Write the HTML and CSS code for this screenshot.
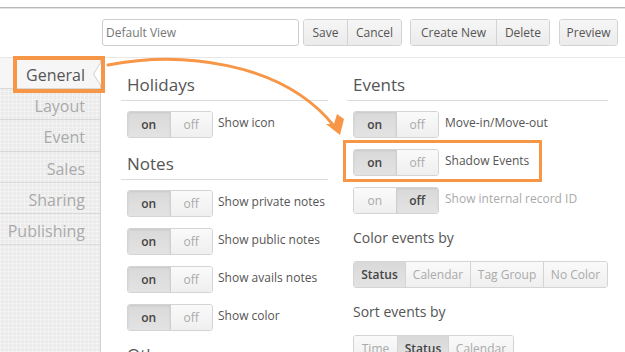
FILE: index.html
```html
<!DOCTYPE html>
<html>
<head>
<meta charset="utf-8">
<link rel="stylesheet" href="styles.css">
</head>
<body>
<div class="page">
  <div class="topline"></div>
  <div class="toolbar">
    <div class="view-input">Default View</div>
    <div class="btn-group g-first">
      <div class="btn w-save">Save</div>
      <div class="btn w-cancel">Cancel</div>
    </div>
    <div class="btn-group g-second">
      <div class="btn w-create">Create New</div>
      <div class="btn w-delete">Delete</div>
    </div>
    <div class="btn-group g-third">
      <div class="btn w-preview">Preview</div>
    </div>
  </div>
  <div class="main">
    <nav class="sidebar">
      <div class="nav-item active">General
        <svg class="notch" width="9" height="22" viewBox="0 0 9 22"><polygon points="9,0 1.5,11 9,22" fill="#ffffff"/><polyline points="8.5,0 1.5,11 8.5,22" fill="none" stroke="#cfcfcf" stroke-width="1"/></svg>
      </div>
      <div class="nav-item">Layout</div>
      <div class="nav-item">Event</div>
      <div class="nav-item">Sales</div>
      <div class="nav-item">Sharing</div>
      <div class="nav-item">Publishing</div>
    </nav>
    <div class="content">
      <div class="col col-left">
        <h2 class="heading first">Holidays</h2>
        <div class="rows">
          <div class="row"><div class="toggle"><span class="t-on sel">on</span><span class="t-off">off</span></div><span class="label">Show icon</span></div>
        </div>
        <h2 class="heading">Notes</h2>
        <div class="rows">
          <div class="row"><div class="toggle"><span class="t-on sel">on</span><span class="t-off">off</span></div><span class="label">Show private notes</span></div>
          <div class="row"><div class="toggle"><span class="t-on sel">on</span><span class="t-off">off</span></div><span class="label">Show public notes</span></div>
          <div class="row"><div class="toggle"><span class="t-on sel">on</span><span class="t-off">off</span></div><span class="label">Show avails notes</span></div>
          <div class="row"><div class="toggle"><span class="t-on sel">on</span><span class="t-off">off</span></div><span class="label">Show color</span></div>
        </div>
        <h2 class="heading other">Other</h2>
      </div>
      <div class="col col-right">
        <h2 class="heading first">Events</h2>
        <div class="rows">
          <div class="row"><div class="toggle"><span class="t-on sel">on</span><span class="t-off">off</span></div><span class="label">Move-in/Move-out</span></div>
          <div class="row"><div class="toggle"><span class="t-on sel">on</span><span class="t-off">off</span></div><span class="label">Shadow Events</span></div>
          <div class="row"><div class="toggle"><span class="t-on">on</span><span class="t-off sel">off</span></div><span class="label dim">Show internal record ID</span></div>
        </div>
        <div class="sub-label">Color events by</div>
        <div class="segmented">
          <span class="seg sel s-status">Status</span><span class="seg s-cal">Calendar</span><span class="seg s-tag">Tag Group</span><span class="seg s-none">No Color</span>
        </div>
        <div class="sub-label">Sort events by</div>
        <div class="segmented">
          <span class="seg s-time">Time</span><span class="seg sel s-status">Status</span><span class="seg s-cal2">Calendar</span>
        </div>
      </div>
    </div>
  </div>

  <div class="hl hl-general"></div>
  <div class="hl hl-shadow"></div>
  <svg class="arrow" width="625" height="352" viewBox="0 0 625 352">
    <path d="M108 65 C 180 51, 282 61, 334 126" fill="none" stroke="#f79646" stroke-width="3" stroke-linecap="round"/>
    <polygon points="340,135 326,124 334,124 337,114 344,119" fill="#f79646"/>
  </svg>
</div>
</body>
</html>
```
FILE: styles.css
```css
html, body {
  margin: 0;
  padding: 0;
  width: 625px;
  height: 352px;
  overflow: hidden;
  background: #ffffff;
}
body {
  font-family: "Open Sans", "DejaVu Sans", sans-serif;
  color: #555;
}
.page {
  position: relative;
  width: 625px;
  height: 352px;
  overflow: hidden;
}
.topline {
  height: 7px;
  border-bottom: 1px solid #b9b9b9;
}
.toolbar {
  display: flex;
  align-items: stretch;
  border-top: 1px solid #e2e2e2;
  border-bottom: 1px solid #e8e8e8;
  padding: 10px 0 11px 102px;
  height: 27px;
}
.view-input {
  box-sizing: border-box;
  width: 197px;
  height: 27px;
  border: 1px solid #cdcdcd;
  border-radius: 3px;
  font-size: 12px;
  line-height: 25px;
  padding-left: 3px;
  color: #777;
  background: #fff;
}
.btn-group {
  display: flex;
  border: 1px solid #d3d3d3;
  border-radius: 3px;
  overflow: hidden;
  box-sizing: border-box;
  height: 27px;
}
.g-first { margin-left: 4px; }
.g-second { margin-left: 8px; }
.g-third { margin-left: 9px; }
.btn {
  box-sizing: border-box;
  font-size: 12px;
  line-height: 25px;
  text-align: center;
  color: #555;
  background: linear-gradient(#f6f6f6, #ebebeb);
}
.btn + .btn { border-left: 1px solid #d3d3d3; }
.w-save { width: 43px; }
.w-cancel { width: 54px; }
.w-create { width: 85px; }
.w-delete { width: 53px; }
.w-preview { width: 57px; }

.main {
  display: flex;
  height: 294px;
}
.sidebar {
  width: 100px;
  border-right: 1px solid #d2d2d2;
  background-color: #ebebeb;
  background-image:
    repeating-linear-gradient(90deg, rgba(255,255,255,0.35) 0 1px, transparent 1px 4px),
    repeating-linear-gradient(0deg, rgba(255,255,255,0.35) 0 1px, transparent 1px 4px);
}
.nav-item {
  position: relative;
  box-sizing: border-box;
  height: 31.2px;
  padding: 5px 15px 0 0;
  line-height: 25.2px;
  font-size: 16px;
  text-align: right;
  color: #aaa;
  border-bottom: 1px solid #d9d9d9;
}
.nav-item.active {
  color: #555;
  background: #f6f6f6;
}
.notch {
  position: absolute;
  right: -1px;
  top: 5px;
}
.content {
  flex: 1;
  display: flex;
  padding: 16px 0 0 20px;
  gap: 19px;
}
.col-left { width: 207px; }
.col-right { width: 261px; }
.heading {
  margin: 15px 0 0 0;
  padding: 0 0 4px 6px;
  font-size: 17px;
  line-height: 22px;
  font-weight: 400;
  color: #555;
  border-bottom: 1px solid #dcdcdc;
}
.heading.first { margin-top: 0; }
.heading.other { margin-top: 13px; }
.rows {
  display: flex;
  flex-direction: column;
  gap: 11px;
  margin-top: 10px;
  padding-left: 6px;
}
.row {
  display: flex;
  align-items: flex-start;
  height: 27px;
}
.toggle {
  display: flex;
  box-sizing: border-box;
  width: 86px;
  height: 27px;
  border: 1px solid #d4d4d4;
  border-radius: 3px;
  overflow: hidden;
}
.toggle span {
  flex: 1;
  text-align: center;
  font-size: 12px;
  line-height: 26px;
  color: #aaa;
  background: linear-gradient(#fafafa, #efefef);
}
.toggle .t-off { border-left: 1px solid #cfcfcf; }
.toggle span.sel {
  color: #444;
  font-weight: 600;
  background: linear-gradient(#d9d9d9, #e3e3e3);
  box-shadow: inset 0 1px 2px rgba(0,0,0,0.08);
}
.label {
  margin-left: 5px;
  font-size: 12px;
  line-height: 24px;
  color: #555;
}
.label.dim { color: #aaa; }
.col-right .label { margin-left: 6px; }
.sub-label {
  margin: 14px 0 0 6px;
  font-size: 14px;
  line-height: 20px;
  color: #555;
}
.segmented {
  display: flex;
  margin: 13px 0 0 6px;
  box-sizing: border-box;
  height: 27px;
  width: max-content;
  border: 1px solid #d4d4d4;
  border-radius: 3px;
  overflow: hidden;
}
.seg {
  box-sizing: border-box;
  text-align: center;
  font-size: 12px;
  line-height: 25px;
  color: #aaa;
  background: linear-gradient(#fafafa, #efefef);
}
.seg + .seg { border-left: 1px solid #d4d4d4; }
.seg.sel {
  color: #444;
  font-weight: 600;
  background: linear-gradient(#d9d9d9, #e3e3e3);
}
.s-status { width: 51px; }
.s-cal { width: 65px; }
.s-tag { width: 73px; }
.s-none { width: 64px; }
.s-time { width: 43px; }
.s-cal2 { width: 65px; }

.hl {
  position: absolute;
  box-sizing: border-box;
  border: 4px solid #f79646;
}
.hl-general {
  left: 13px;
  top: 56px;
  width: 92px;
  height: 37px;
}
.hl-shadow {
  left: 343px;
  top: 140px;
  width: 199px;
  height: 42px;
  border-width: 3.5px;
}
.arrow {
  position: absolute;
  left: 0;
  top: 0;
}
```
